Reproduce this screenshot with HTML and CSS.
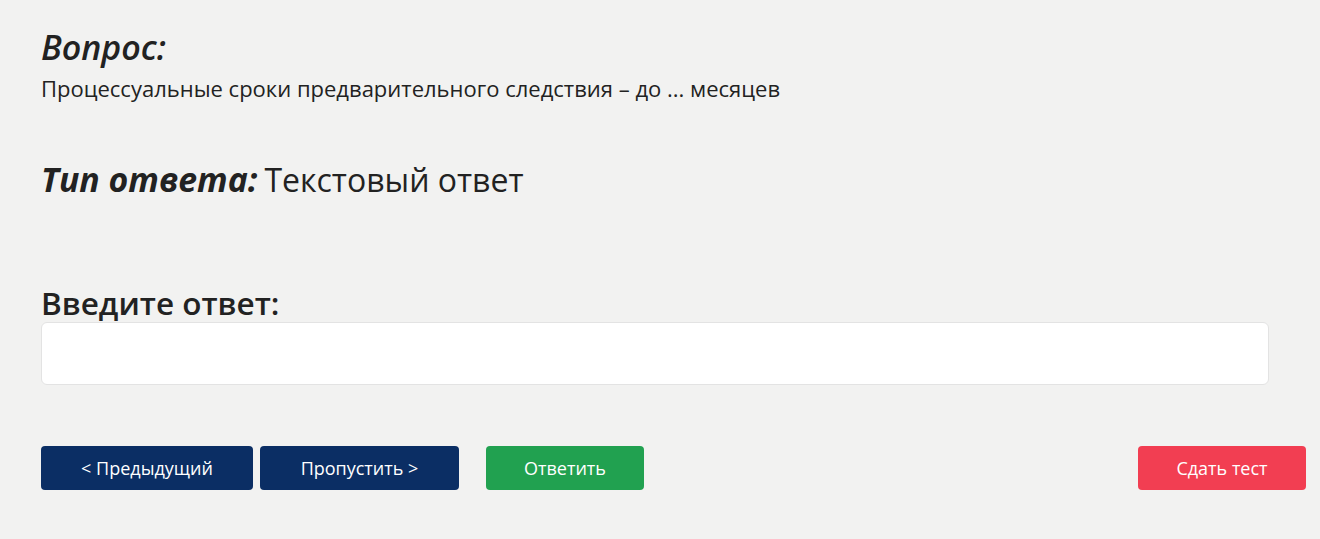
FILE: index.html
```html
<!DOCTYPE html>
<html lang="ru">
<head>
  <meta charset="UTF-8">
  <meta name="viewport" content="width=device-width, initial-scale=1.0">
  <title>Тест</title>
  <link rel="stylesheet" href="styles.css">
</head>
<body>
  <div class="test-page">
    <div class="question">
      <h2 class="question-title">Вопрос:</h2>
      <p class="question-text">Процессуальные сроки предварительного следствия – до ... месяцев</p>
    </div>

    <div class="answer-type">
      <span class="answer-type-label">Тип ответа:</span>
      <span class="answer-type-value">Текстовый ответ</span>
    </div>

    <div class="answer">
      <label class="answer-label" for="answer-input">Введите ответ:</label>
      <input class="answer-input" id="answer-input" type="text">
    </div>

    <div class="controls">
      <button class="btn btn-nav btn-prev">&lt; Предыдущий</button>
      <button class="btn btn-nav btn-skip">Пропустить &gt;</button>
      <button class="btn btn-answer">Ответить</button>
      <button class="btn btn-finish">Сдать тест</button>
    </div>
  </div>
</body>
</html>
```

FILE: styles.css
```css
body {
  margin: 0;
  background-color: #f2f2f1;
  font-family: "Open Sans", "Noto Sans", sans-serif;
  color: #222;
}

.test-page {
  padding: 25px 14px 0 41px;
}

.question-title {
  margin: 0;
  font-size: 34px;
  font-style: italic;
  font-weight: 600;
  line-height: 44px;
}

.question-text {
  margin: 4px 0 0;
  font-size: 22px;
  line-height: 30px;
}

.answer-type {
  margin-top: 54px;
  display: flex;
  align-items: baseline;
  gap: 7px;
  font-size: 32px;
  line-height: 44px;
}

.answer-type-label {
  font-size: 33.8px;
  font-style: italic;
  font-weight: 700;
}

.answer-type-value {
  font-weight: 400;
}

.answer {
  margin-top: 81px;
  display: flex;
  flex-direction: column;
}

.answer-label {
  font-size: 31.5px;
  font-weight: 600;
  line-height: 39px;
}

.answer-input {
  box-sizing: border-box;
  width: 1228px;
  height: 63px;
  border: 1px solid #e3e3e3;
  border-radius: 6px;
  background: #fff;
  font-family: inherit;
  font-size: 18px;
  padding: 0 12px;
}

.controls {
  margin-top: 61px;
  display: flex;
  align-items: center;
}

.btn {
  height: 44px;
  border: none;
  border-radius: 4px;
  color: #fff;
  font-family: inherit;
  font-size: 18px;
  cursor: pointer;
}

.btn-nav {
  background-color: #0b2e64;
}

.btn-prev {
  width: 212px;
}

.btn-skip {
  width: 199px;
  margin-left: 7px;
}

.btn-answer {
  width: 158px;
  margin-left: 27px;
  background-color: #21a150;
}

.btn-finish {
  width: 168px;
  margin-left: auto;
  background-color: #f23e52;
}
```
